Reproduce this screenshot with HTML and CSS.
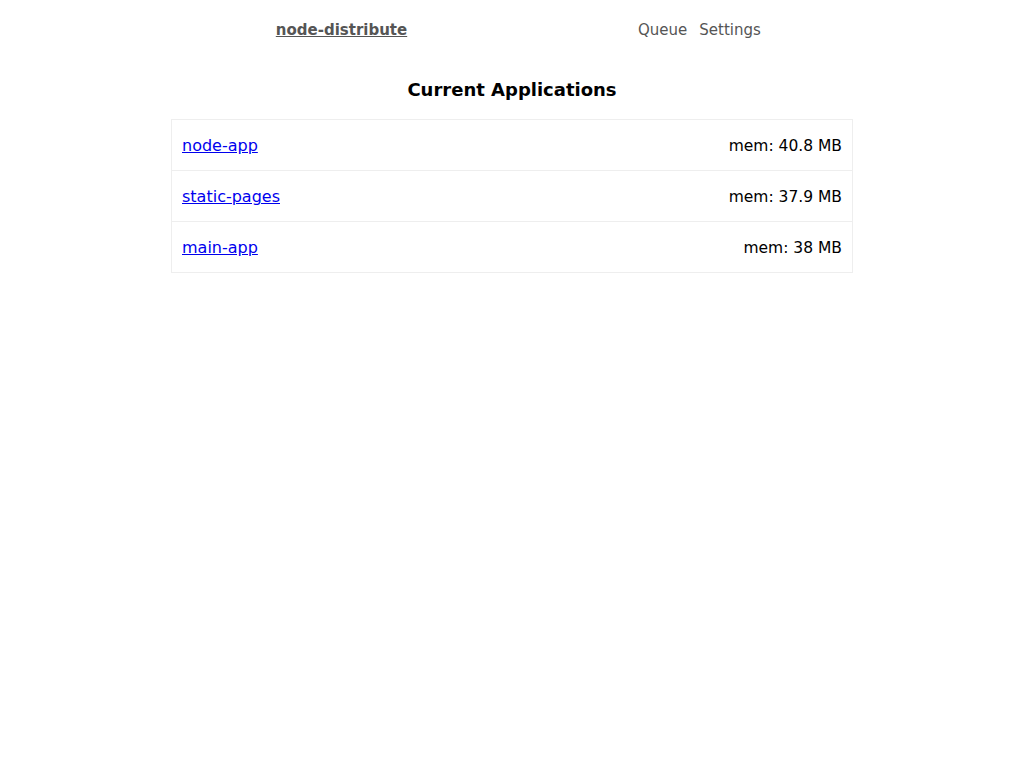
FILE: index.html
```html
<!DOCTYPE html>
<html>
<head>
<meta charset="utf-8">
<title>node-distribute</title>
<link rel="stylesheet" href="styles.css">
</head>
<body>
<div class="page">
  <header class="topbar">
    <div class="brand-cell"><a class="brand" href="#">node-distribute</a></div>
    <nav class="nav">
      <a class="nav-link" href="#">Queue</a>
      <a class="nav-link" href="#">Settings</a>
    </nav>
  </header>
  <h1 class="title">Current Applications</h1>
  <ul class="app-list">
    <li class="app-item"><a class="app-link" href="#">node-app</a><span class="mem">mem: 40.8 MB</span></li>
    <li class="app-item"><a class="app-link" href="#">static-pages</a><span class="mem">mem: 37.9 MB</span></li>
    <li class="app-item"><a class="app-link" href="#">main-app</a><span class="mem">mem: 38 MB</span></li>
  </ul>
</div>
</body>
</html>
```
FILE: styles.css
```css
html, body {
  margin: 0;
  padding: 0;
  background: #fff;
}
body {
  font-family: "DejaVu Sans", Verdana, sans-serif;
  font-size: 16px;
  color: #000;
}
.page {
  width: 682px;
  margin: 0 auto;
}
.topbar {
  display: flex;
  height: 58px;
  align-items: center;
}
.brand-cell {
  width: 341px;
  text-align: center;
}
.brand {
  color: #555;
  font-weight: bold;
  font-size: 15px;
  text-decoration: underline;
}
.nav {
  display: flex;
  gap: 12px;
  padding-left: 126px;
  padding-top: 1px;
}
.nav-link {
  color: #555;
  font-size: 15px;
  text-decoration: none;
}
.title {
  margin: 20px 0 17px;
  text-align: center;
  font-size: 18px;
  font-weight: bold;
  line-height: 24px;
}
.app-list {
  list-style: none;
  margin: 0;
  padding: 0;
  border: 1px solid #eee;
}
.app-item {
  display: flex;
  justify-content: space-between;
  align-items: center;
  padding: 16px 10px 14px;
  line-height: 20px;
  border-top: 1px solid #eee;
}
.app-item:first-child {
  border-top: none;
}
.app-link {
  color: #00e;
  text-decoration: underline;
}
.mem {
  color: #000;
  font-size: 15.5px;
}
```
